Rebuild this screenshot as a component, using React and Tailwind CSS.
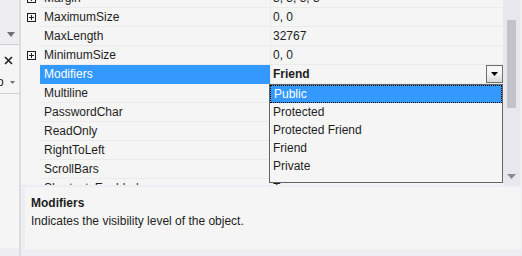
import React from "react";

// values under the open dropdown are hidden in the shot, so leave them blank
const rows = [
  { name: "Margin", value: "3, 3, 3, 3", plus: true },
  { name: "MaximumSize", value: "0, 0", plus: true },
  { name: "MaxLength", value: "32767" },
  { name: "MinimumSize", value: "0, 0", plus: true },
  { name: "Modifiers", value: "Friend", selected: true },
  { name: "Multiline", value: "" },
  { name: "PasswordChar", value: "" },
  { name: "ReadOnly", value: "" },
  { name: "RightToLeft", value: "" },
  { name: "ScrollBars", value: "" },
  { name: "ShortcutsEnabled", value: "True" },
  { name: "Size", value: "100, 20" },
];

const options = ["Public", "Protected", "Protected Friend", "Friend", "Private"];

const PlusBox = () => (
  <div className="w-[9px] h-[9px] border border-[#1e1e1e] relative">
    <div className="absolute left-[1px] right-[1px] top-[3px] h-[1px] bg-[#1e1e1e]" />
    <div className="absolute top-[1px] bottom-[1px] left-[3px] w-[1px] bg-[#1e1e1e]" />
  </div>
);

const Row = ({ row }) => (
  <div className="flex h-[19px]">
    <div className="w-[19px] flex items-center justify-center pl-[1px]">
      {row.plus && <PlusBox />}
    </div>
    <div
      className={
        row.selected
          ? "w-[230px] h-[19px] border-b border-[#3399ff] bg-[#3399ff] text-white pl-[4px] leading-[18px]"
          : "w-[230px] h-[19px] border-b border-[#ebebeb] pl-[4px] leading-[18px]"
      }
    >
      {row.name}
    </div>
    <div className="flex-1 h-[19px] border-l border-b border-[#ebebeb] pl-[2px] leading-[18px] flex justify-between">
      <span className={row.selected ? "font-bold" : ""}>{row.value}</span>
      {row.selected && (
        <div className="w-[17px] h-[18px] border border-[#707070] bg-gradient-to-b from-[#f7f7f7] from-40% to-[#dadada] flex items-center justify-center">
          <svg width="7" height="4" viewBox="0 0 7 4">
            <path d="M0 0h7L3.5 4z" fill="#000" />
          </svg>
        </div>
      )}
    </div>
  </div>
);

export default function App() {
  return (
    <div
      className="w-[522px] h-[256px] bg-[#eeeef2] flex overflow-hidden text-[12px] text-[#1e1e1e]"
      style={{ fontFamily: '"Liberation Sans", Arial, sans-serif' }}
    >
      {/* left tool window fragment */}
      <div className="w-[19px] flex flex-col">
        <div className="h-[44px] flex items-end justify-center pb-[7px] pl-[2px]">
          <svg width="8" height="5" viewBox="0 0 8 5">
            <path d="M0 0h8L4 5z" fill="#717171" />
          </svg>
        </div>
        <div className="h-[1px] bg-[#cccedb]" />
        <div className="h-[48px] bg-[#f5f5f5] flex flex-col">
          <div className="h-[24px] flex items-center pl-[4px] pt-[6px]">
            <svg width="9" height="9" viewBox="0 0 9 9">
              <path d="M1 1l7 7M8 1l-7 7" stroke="#1e1e1e" strokeWidth="1.6" />
            </svg>
          </div>
          <div className="h-[24px] flex items-center gap-[6px] pt-[2px] -ml-[3px]">
            <span className="text-[#1e1e1e]">o</span>
            <svg width="5" height="3" viewBox="0 0 5 3">
              <path d="M0 0h5L2.5 3z" fill="#717171" />
            </svg>
          </div>
        </div>
        <div className="flex-1 bg-[#f5f5f5] border-t border-[#cccedb] mb-[8px]" />
      </div>
      <div className="w-[2px] bg-[#dcdce2]" />

      {/* property grid */}
      <div className="flex-1 flex flex-col">
        <div className="h-[185px] flex relative">
          <div className="w-[482px] bg-[#f5f5f5] overflow-hidden">
            <div className="-mt-[11px]">
              {rows.map((r) => (
                <Row key={r.name} row={r} />
              ))}
            </div>
          </div>
          <div className="w-[17px] bg-[#e8e8ec] flex flex-col items-center pt-[20px]">
            <div className="w-[9px] h-[88px] bg-[#c2c3c9]" />
            <div className="flex-1" />
            <svg width="9" height="5" viewBox="0 0 9 5" className="mb-[6px]">
              <path d="M0 0h9L4.5 5z" fill="#868999" />
            </svg>
          </div>
          <div className="flex-1 bg-[#f0f0f0]" />

          {/* dropdown list */}
          <div className="absolute left-[248px] top-[84px] w-[234px] h-[99px] border border-[#646464] bg-[#f5f5f5]">
            {options.map((o, i) => (
              <div
                key={o}
                className={
                  i === 0
                    ? "h-[18px] leading-[16px] pl-[3px] bg-[#3399ff] text-white border border-dotted border-black"
                    : "h-[18px] leading-[18px] pl-[3px]"
                }
              >
                {o}
              </div>
            ))}
          </div>
        </div>
        <div className="h-[2px]" />
        <div className="h-[62px] ml-[4px] mr-[1px] bg-[#f5f5f5] pl-[6px] pt-[7px]">
          <div className="font-bold leading-[18px]">Modifiers</div>
          <div className="leading-[18px]">Indicates the visibility level of the object.</div>
        </div>
        <div className="flex-1" />
      </div>
    </div>
  );
}
